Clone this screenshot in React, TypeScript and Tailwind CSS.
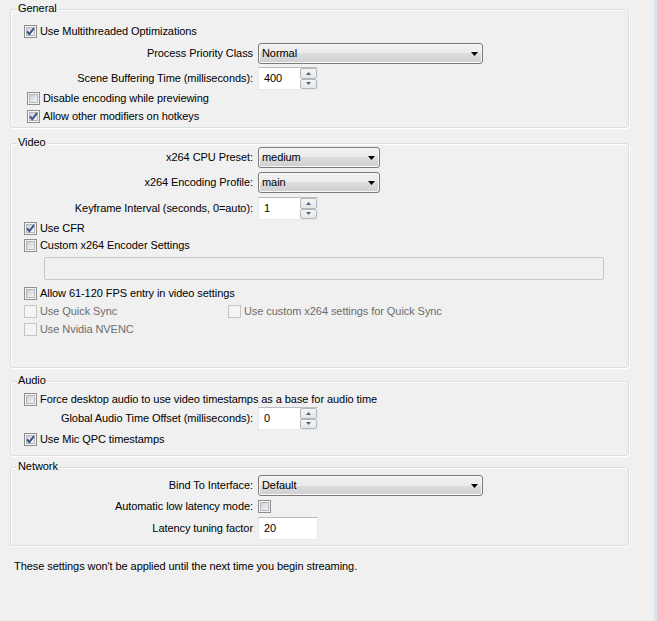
import type { ReactNode } from 'react';

function CheckBox({ checked = false, disabled = false }: { checked?: boolean; disabled?: boolean }) {
  return (
    <svg width="13" height="13" viewBox="0 0 13 13" className="shrink-0">
      <defs>
        <linearGradient id="cbFill" x1="0" y1="0" x2="1" y2="1">
          <stop offset="0" stopColor="#c9cdd4" />
          <stop offset="1" stopColor="#f7f7f7" />
        </linearGradient>
      </defs>
      <rect x="0.5" y="0.5" width="12" height="12" fill="#f4f4f4" stroke={disabled ? '#c5c5c5' : '#8e8f8f'} />
      {!disabled && <rect x="2.5" y="2.5" width="8" height="8" fill="url(#cbFill)" stroke="#b4b8be" />}
      {checked && (
        <path d="M3 6.3 L5.3 9.2 L10 3.2" fill="none" stroke="#3d5182" strokeWidth="1.9" strokeLinejoin="miter" />
      )}
    </svg>
  );
}

function Check({ label, checked, disabled, className = '' }: { label: string; checked?: boolean; disabled?: boolean; className?: string }) {
  return (
    <div className={`flex h-[18px] items-center ${className}`}>
      <CheckBox checked={checked} disabled={disabled} />
      <span className={`ml-[3px] whitespace-nowrap ${disabled ? 'text-[#6d6d6d]' : ''}`}>{label}</span>
    </div>
  );
}

function Field({ label, children, className = '' }: { label: ReactNode; children: ReactNode; className?: string }) {
  return (
    <div className={`flex items-center ${className}`}>
      <div className="w-[242px] whitespace-nowrap text-right">{label}</div>
      <div className="ml-[5px]">{children}</div>
    </div>
  );
}

function Combo({ value, className = '' }: { value: string; className?: string }) {
  return (
    <div
      className={`flex h-[21px] items-center justify-between rounded-[3px] border border-[#7a7a7a] bg-[linear-gradient(#f2f2f2,#ebebeb_50%,#dddddd_50%,#cfcfcf)] pl-[3px] pr-[4px] shadow-[inset_0_0_0_1px_#f8f8f8] ${className}`}
    >
      <span>{value}</span>
      <svg width="7" height="4" viewBox="0 0 7 4">
        <polygon points="0,0 7,0 3.5,4" fill="#000" />
      </svg>
    </div>
  );
}

function SpinBtn({ up }: { up?: boolean }) {
  return (
    <div className="flex h-[11px] items-center justify-center rounded-[2px] border border-[#b3b7bd] bg-[linear-gradient(#f5f5f5,#e4e6e8)]">
      <svg width="5" height="3" viewBox="0 0 5 3">
        <polygon points={up ? '0,3 5,3 2.5,0' : '0,0 5,0 2.5,3'} fill="#4d6185" />
      </svg>
    </div>
  );
}

function Spin({ value }: { value: string }) {
  return (
    <div className="flex h-[23px] w-[60px] border border-[#e3e9ef] border-t-[#b9bcc2] bg-white">
      <div className="flex-1 pl-[5px] pt-[4px]">{value}</div>
      <div className="flex w-[17px] flex-col">
        <SpinBtn up />
        <SpinBtn />
      </div>
    </div>
  );
}

function Group({ title, className = '', children }: { title: string; className?: string; children: ReactNode }) {
  return (
    <div
      className={`relative w-[619px] shrink-0 rounded-[3px] border border-[#d5dfe5] shadow-[inset_1px_1px_0_#fff,1px_1px_0_#fff] ${className}`}
    >
      <div className="absolute -top-[8px] left-[6px] bg-[#f0f0f0] px-[1px]">{title}</div>
      {children}
    </div>
  );
}

export default function App() {
  return (
    <div className="flex h-[621px] w-[657px] overflow-hidden bg-[#f0f0f0] font-['Liberation_Sans',Arial,sans-serif] text-[11px] leading-[13px] tracking-[-0.07px] text-black">
      <div className="flex w-[654px] flex-col pl-[10px]">
        <Group title="General" className="mt-[9px] h-[119px]">
          <div className="flex flex-col pt-[12px]">
            <Check label="Use Multithreaded Optimizations" checked className="pl-[13px]" />
            <Field label="Process Priority Class" className="mt-[3px]">
              <Combo value="Normal" className="w-[225px]" />
            </Field>
            <Field label="Scene Buffering Time (milliseconds):" className="mt-[3px]">
              <Spin value="400" />
            </Field>
            <Check label="Disable encoding while previewing" className="-mt-[1px] pl-[16px]" />
            <Check label="Allow other modifiers on hotkeys" checked className="pl-[16px]" />
          </div>
        </Group>

        <Group title="Video" className="mt-[15px] h-[225px]">
          <div className="flex flex-col pt-[3px]">
            <Field label="x264 CPU Preset:">
              <Combo value="medium" className="w-[122px]" />
            </Field>
            <Field label="x264 Encoding Profile:" className="mt-[4px]">
              <Combo value="main" className="w-[122px]" />
            </Field>
            <Field label="Keyframe Interval (seconds, 0=auto):" className="mt-[4px]">
              <Spin value="1" />
            </Field>
            <Check label="Use CFR" checked className="-mt-[1px] pl-[13px]" />
            <Check label="Custom x264 Encoder Settings" className="-mt-[1px] pl-[13px]" />
            <div className="ml-[33px] mt-[3px] h-[23px] w-[560px] rounded-[2px] border border-[#c4c7cc] bg-[#f0f0f0]" />
            <Check label="Allow 61-120 FPS entry in video settings" className="mt-[4px] pl-[13px]" />
            <div className="flex">
              <Check label="Use Quick Sync" disabled className="w-[217px] pl-[13px]" />
              <Check label="Use custom x264 settings for Quick Sync" disabled />
            </div>
            <Check label="Use Nvidia NVENC" disabled className="pl-[13px]" />
          </div>
        </Group>

        <Group title="Audio" className="mt-[13px] h-[75px]">
          <div className="flex flex-col pt-[8px]">
            <Check label="Force desktop audio to use video timestamps as a base for audio time" className="pl-[13px]" />
            <Field label="Global Audio Time Offset (milliseconds):" className="-mt-[1px]">
              <Spin value="0" />
            </Field>
            <Check label="Use Mic QPC timestamps" checked className="pl-[13px]" />
          </div>
        </Group>

        <Group title="Network" className="mt-[11px] h-[79px]">
          <div className="flex flex-col pt-[7px]">
            <Field label="Bind To Interface:">
              <Combo value="Default" className="w-[225px]" />
            </Field>
            <Field label="Automatic low latency mode:" className="mt-[4px]">
              <CheckBox />
            </Field>
            <div className="mt-[4px] flex items-center">
              <div className="w-[245px] whitespace-nowrap text-right">
                Latency tuning factor<span className="text-[#c8c8c8]">:</span>
              </div>
              <div className="ml-[2px] h-[23px] w-[60px] border border-[#e3e9ef] border-t-[#b9bcc2] bg-white pl-[5px] pt-[4px]">20</div>
            </div>
          </div>
        </Group>

        <p className="mt-[14px] pl-[4px]">These settings won't be applied until the next time you begin streaming.</p>
      </div>
      <div className="w-[3px] bg-[#dae5f2]" />
    </div>
  );
}
